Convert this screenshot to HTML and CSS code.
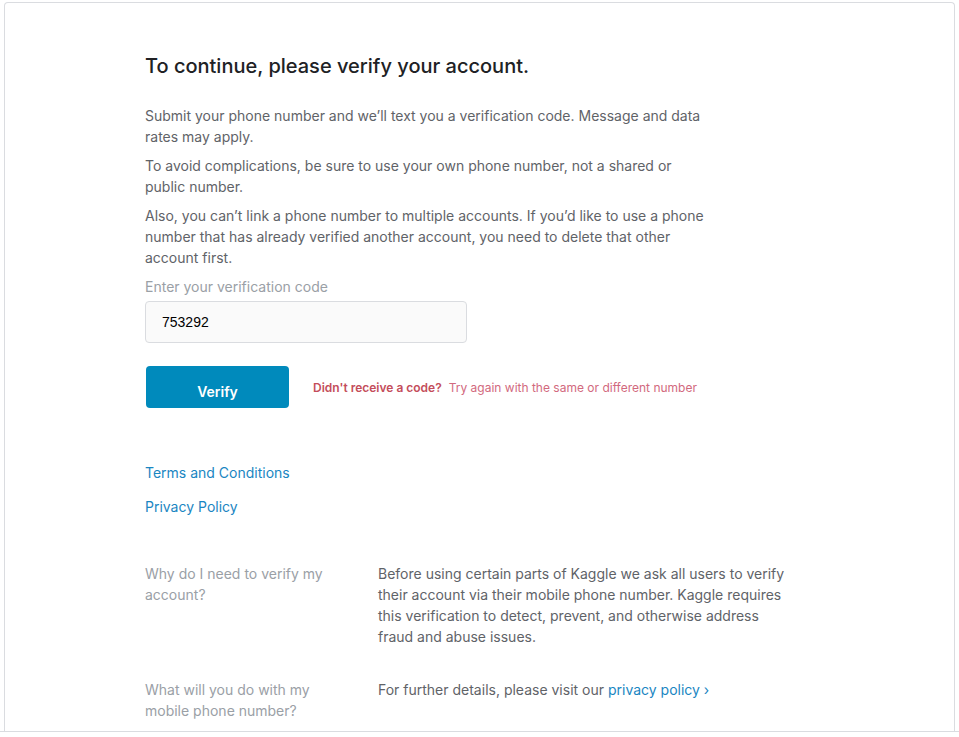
FILE: index.html
```html
<!DOCTYPE html>
<html>
<head>
<meta charset="utf-8">
<link rel="stylesheet" href="styles.css">
</head>
<body>
<div class="frame">
  <div class="content">
    <h1 class="title">To continue, please verify your account.</h1>
    <p class="para">Submit your phone number and we’ll text you a verification code. Message and data rates may apply.</p>
    <p class="para">To avoid complications, be sure to use your own phone number, not a shared or public number.</p>
    <p class="para">Also, you can’t link a phone number to multiple accounts. If you’d like to use a phone number that has already verified another account, you need to delete that other account first.</p>
    <label class="label" for="code">Enter your verification code</label>
    <input class="code-input" id="code" type="text" value="753292">
    <div class="actions">
      <button class="verify-btn">Verify</button>
      <span class="resend"><span class="resend-q">Didn't receive a code?</span><span class="resend-a">Try again with the same or different number</span></span>
    </div>
    <div class="links">
      <a class="link" href="#">Terms and Conditions</a>
      <a class="link" href="#">Privacy Policy</a>
    </div>
    <div class="faq">
      <div class="faq-q">Why do I need to verify my account?</div>
      <div class="faq-a">Before using certain parts of Kaggle we ask all users to verify their account via their mobile phone number. Kaggle requires this verification to detect, prevent, and otherwise address fraud and abuse issues.</div>
      <div class="faq-q">What will you do with my mobile phone number?</div>
      <div class="faq-a">For further details, please visit our <a class="link" href="#">privacy policy ›</a></div>
    </div>
  </div>
</div>
<div class="bottom-line"></div>
</body>
</html>
```
FILE: styles.css
```css
html, body {
  margin: 0;
  padding: 0;
  background: #ffffff;
  overflow: hidden;
}
body {
  font-family: Inter, "Noto Sans", sans-serif;
  height: 737px;
}
.frame {
  margin: 2px 4px 0 4px;
  border: 1px solid #dadce0;
  border-bottom: none;
  border-radius: 4px 4px 0 0;
  height: 729px;
  box-sizing: border-box;
  overflow: hidden;
}
.content {
  padding: 51px 0 0 140px;
}
.title {
  margin: 0 0 27px 0;
  font-size: 20px;
  line-height: 24px;
  font-weight: 500;
  color: #202124;
}
.para {
  margin: 0 0 8px 0;
  width: 565px;
  font-size: 14px;
  line-height: 21px;
  color: #5f6368;
}
.label {
  display: block;
  margin-top: 0;
  font-size: 14px;
  line-height: 21px;
  color: #9aa0a6;
}
.code-input {
  display: block;
  margin-top: 4px;
  width: 322px;
  height: 42px;
  box-sizing: border-box;
  border: 1px solid #dadce0;
  border-radius: 4px;
  background: #fafafa;
  padding: 0 16px;
  font-family: "Liberation Sans", Arial, sans-serif;
  font-size: 14px;
  color: #000;
  outline: none;
}
.actions {
  display: flex;
  align-items: center;
  margin-top: 23px;
  padding-left: 1px;
}
.verify-btn {
  width: 143px;
  height: 42px;
  border: none;
  border-radius: 4px;
  background: #008abc;
  color: #fff;
  font-family: Inter, sans-serif;
  font-size: 14px;
  font-weight: 600;
  padding: 8px 0 0 0;
}
.resend {
  margin-left: 24px;
  font-size: 12px;
  color: #d0546a;
  margin-top: 1px;
}
.resend-q {
  font-weight: 600;
  color: #c44d5b;
  margin-right: 7px;
}
.resend-a {
  color: #d2697e;
}
.links {
  display: flex;
  flex-direction: column;
  gap: 13px;
  margin-top: 54px;
}
.link {
  color: #1a86c2;
  text-decoration: none;
  font-size: 14px;
  line-height: 21px;
}
.links .link {
  align-self: flex-start;
}
.faq {
  display: grid;
  grid-template-columns: 233px 410px;
  row-gap: 32px;
  margin-top: 46px;
  font-size: 14px;
  line-height: 21px;
}
.faq-q {
  color: #9aa0a6;
  width: 185px;
}
.faq-a {
  color: #5f6368;
}
.bottom-line {
  height: 1px;
  background: #dadce0;
  width: 100%;
}
```
